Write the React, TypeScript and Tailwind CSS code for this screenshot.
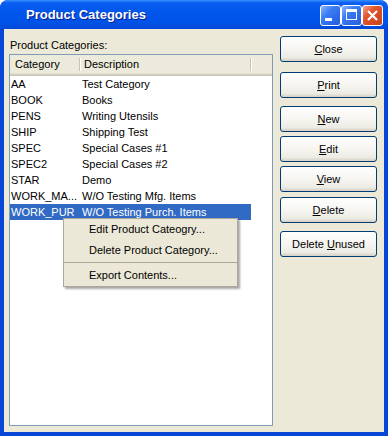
const ROWS = [
  { code: "AA", desc: "Test Category" },
  { code: "BOOK", desc: "Books" },
  { code: "PENS", desc: "Writing Utensils" },
  { code: "SHIP", desc: "Shipping Test" },
  { code: "SPEC", desc: "Special Cases #1" },
  { code: "SPEC2", desc: "Special Cases #2" },
  { code: "STAR", desc: "Demo" },
  { code: "WORK_MA...", desc: "W/O Testing Mfg. Items" },
  { code: "WORK_PUR", desc: "W/O Testing Purch. Items", selected: true },
];

const BUTTONS = [
  { key: "C", rest: "lose", mt: "mt-0" },
  { key: "P", rest: "rint", mt: "mt-[10px]" },
  { key: "N", rest: "ew", mt: "mt-[8px]" },
  { key: "E", rest: "dit", mt: "mt-[4px]" },
  { key: "V", rest: "iew", mt: "mt-[4px]" },
  { key: "D", rest: "elete", mt: "mt-[5px]" },
  { pre: "Delete ", key: "U", rest: "nused", mt: "mt-[8px]" },
];

const TitleButton = ({ kind }: { kind: "min" | "max" | "close" }) => {
  const bg =
    kind === "close"
      ? "bg-[linear-gradient(135deg,#F3A58B_0%,#E2562F_35%,#D44A22_70%,#C8411E_100%)]"
      : "bg-[linear-gradient(135deg,#8DB6FF_0%,#3C7FF5_35%,#2D69E8_70%,#2A5FD8_100%)]";
  return (
    <div
      className={`relative w-[21px] h-[21px] rounded-[3px] border border-white ${bg}`}
    >
      {kind === "min" && (
        <div className="absolute left-[4px] top-[12px] w-[7px] h-[3px] bg-white" />
      )}
      {kind === "max" && (
        <div className="absolute left-[4px] top-[3px] w-[11px] h-[11px] border border-white border-t-[3px]" />
      )}
      {kind === "close" && (
        <svg className="absolute left-0 top-0" width="19" height="19" viewBox="0 0 19 19">
          <path d="M5 5 L14 14 M14 5 L5 14" stroke="white" strokeWidth="2.2" />
        </svg>
      )}
    </div>
  );
};

export default function App() {
  return (
    <div className="w-[388px] h-[436px] flex flex-col bg-[#0846D8] rounded-t-[8px] overflow-hidden font-['Liberation_Sans',Arial,sans-serif] text-black">
      {/* Title bar */}
      <div className="h-[29px] flex items-center pl-[26px] pr-[5px] bg-[linear-gradient(180deg,#3A8FFF_0%,#0A5EF2_10%,#0055EA_45%,#0052E6_80%,#0048D8_100%)]">
        <span className="text-white font-bold text-[13px] leading-none [text-shadow:1px_1px_0_#0A1E8C]">
          Product Categories
        </span>
        <div className="ml-auto flex gap-[0px] pt-[1px]">
          <TitleButton kind="min" />
          <TitleButton kind="max" />
          <TitleButton kind="close" />
        </div>
      </div>

      {/* Body */}
      <div className="flex-1 mx-[4px] mb-[4px] bg-[#ECE9D8] flex pl-[5px] pr-[7px] gap-[7px] text-[11px]">
        <div className="w-[264px] flex flex-col">
          <div className="h-[25px] pt-[9px] pl-[1px] leading-[14px]">Product Categories:</div>
          <div className="relative flex-1 mb-[6px] border border-[#7F9DB9] bg-white">
            {/* Header */}
            <div className="h-[21px] flex bg-[#EBEADB] shadow-[inset_0_-1px_0_#CBC7B8,inset_0_-2px_0_#D6D2C2,inset_0_-3px_0_#E2DECD]">
              <div className="w-[69px] pl-[5px] pb-[2px] flex items-center">Category</div>
              <div className="w-[2px] mt-[3px] mb-[5px] border-l border-[#C7C5B2] border-r border-r-white" />
              <div className="w-[169px] pl-[3px] pb-[2px] flex items-center">Description</div>
              <div className="w-[2px] mt-[3px] mb-[5px] border-l border-[#C7C5B2] border-r border-r-white" />
            </div>

            {/* Rows */}
            {ROWS.map((r) => (
              <div
                key={r.code}
                className={`w-[241px] h-[16px] flex items-center ${
                  r.selected ? "bg-[#316AC5] text-white" : ""
                }`}
              >
                <div className="w-[71px] pl-[1px] whitespace-nowrap">{r.code}</div>
                <div className="pl-[1px] whitespace-nowrap">{r.desc}</div>
              </div>
            ))}

            {/* Context menu */}
            <div className="absolute left-[53px] top-[163px] w-[175px] h-[69px] bg-[#EBE8D7] border border-[#ACA899] shadow-[2px_2px_2px_rgba(0,0,0,0.35)] flex flex-col">
              <div className="h-[21px] pl-[25px] flex items-center">Edit Product Cateogry...</div>
              <div className="h-[21px] pl-[25px] flex items-center">Delete Product Category...</div>
              <div className="h-[3px] pt-[1px]">
                <div className="h-[1px] bg-[#ACA899]" />
              </div>
              <div className="h-[22px] pl-[25px] flex items-center">Export Contents...</div>
            </div>
          </div>
        </div>

        {/* Buttons */}
        <div className="w-[97px] flex flex-col pt-[7px]">
          {BUTTONS.map((b) => (
            <div
              key={b.key}
              className={`${b.mt} h-[26px] flex items-center justify-center rounded-[3px] border border-[#003C74] bg-[linear-gradient(180deg,#FFFFFF_0%,#F6F5F0_50%,#ECEBE4_85%,#D6D0C5_100%)]`}
            >
              <span>
                {b.pre}
                <span className="underline underline-offset-[1px]">{b.key}</span>
                {b.rest}
              </span>
            </div>
          ))}
        </div>
      </div>
    </div>
  );
}
